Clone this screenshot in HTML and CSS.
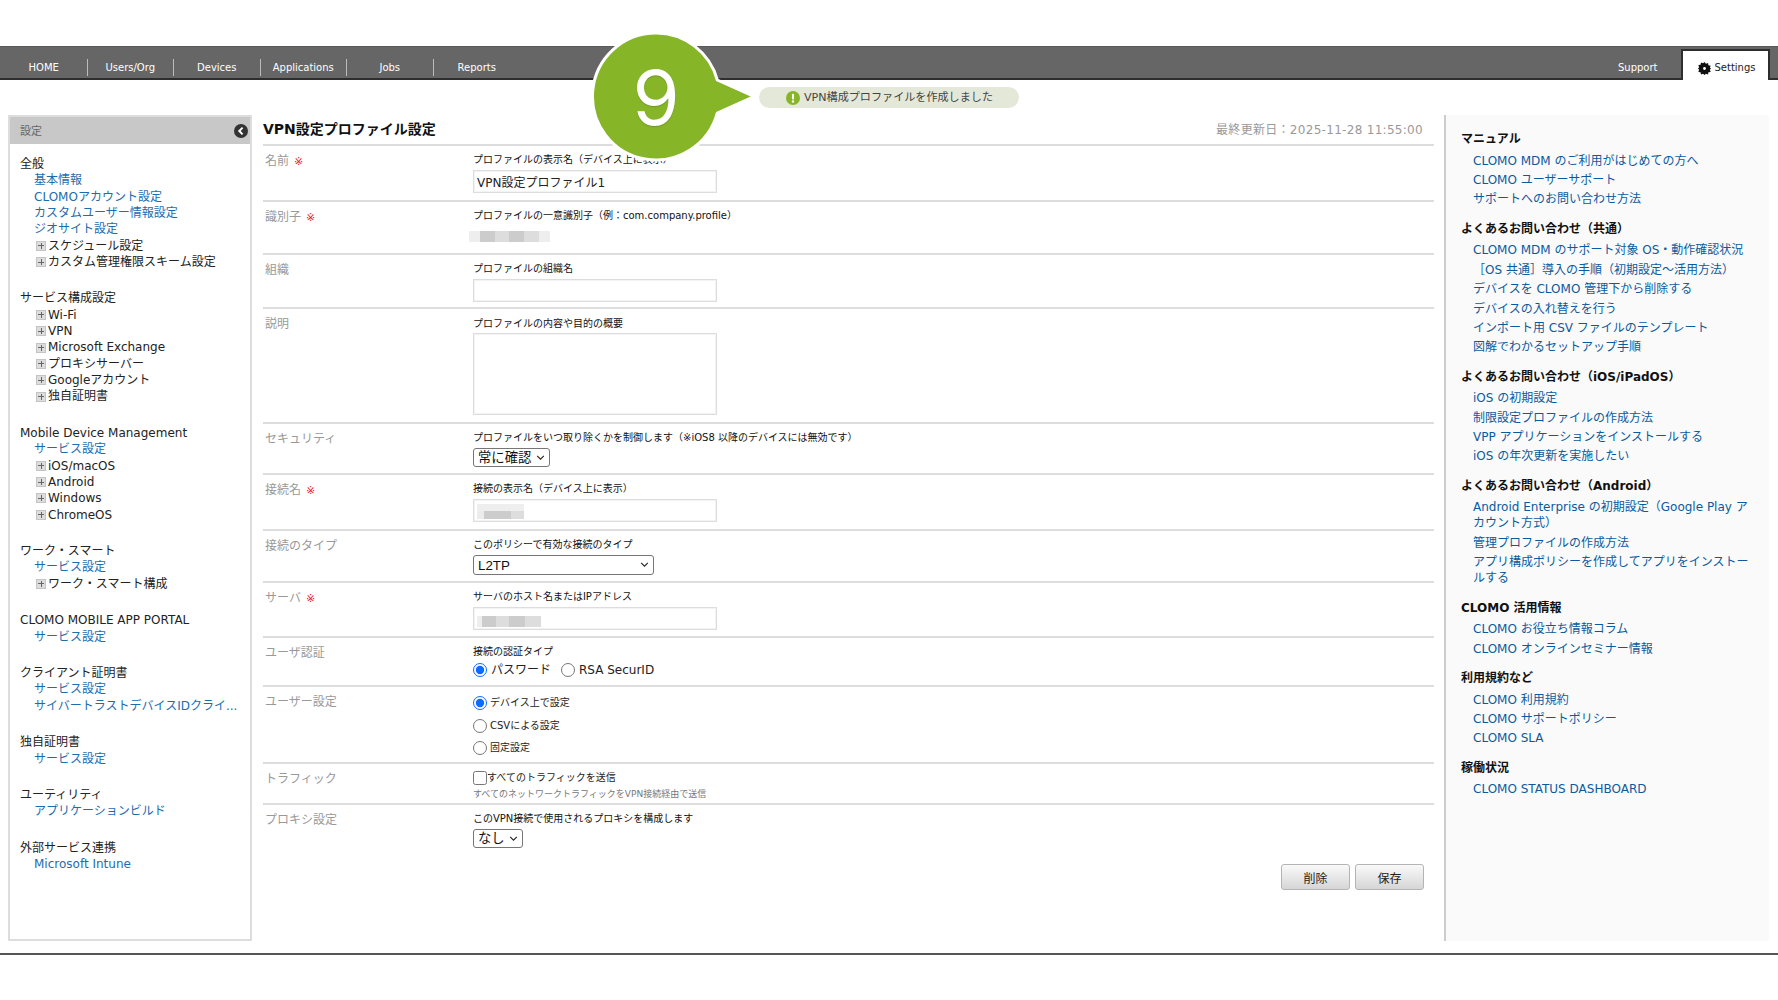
FILE: index.html
```html
<!DOCTYPE html>
<html lang="ja">
<head>
<meta charset="utf-8">
<title>VPN設定プロファイル設定</title>
<link rel="stylesheet" href="styles.css">
</head>
<body>
<nav class="topbar">
  <a class="nav-item sep">HOME</a>
  <a class="nav-item sep">Users/Org</a>
  <a class="nav-item sep">Devices</a>
  <a class="nav-item sep">Applications</a>
  <a class="nav-item sep">Jobs</a>
  <a class="nav-item">Reports</a>
  <a class="nav-item push">Support</a>
  <a class="nav-tab">
    <svg class="gear" viewBox="0 0 24 24"><path d="M12 0l2.600 3.400 4-1.500.6 4.200 4.200.6-1.500 4L24 12l-2.100 2.300 1.500 4-4.200.6-.6 4.200-4-1.500L12 24l-2.600-2.400-4 1.500-.6-4.200-4.200-.6 1.500-4L0 12l2.100-2.300-1.500-4 4.200-.6.6-4.200 4 1.500z" fill="#111"/><circle cx="12" cy="12" r="2.600" fill="#fff"/></svg>
    Settings
  </a>
</nav>

<main class="content">
  <aside class="sidebar">
    <header class="side-head"><span class="side-title">設定</span>
      <svg class="collapse" viewBox="0 0 16 16"><circle cx="8" cy="8" r="8" fill="#333"/><path d="M9.800 4.200L6 8l3.800 3.800" fill="none" stroke="#fff" stroke-width="2.200"/></svg>
    </header>
    <div class="side-body">
      <section class="group">
        <div>全般</div>
        <a class="sub">基本情報</a>
        <a class="sub">CLOMOアカウント設定</a>
        <a class="sub">カスタムユーザー情報設定</a>
        <a class="sub">ジオサイト設定</a>
        <div class="tree"><i class="plus"></i>スケジュール設定</div>
        <div class="tree"><i class="plus"></i>カスタム管理権限スキーム設定</div>
      </section>
      <section class="group">
        <div>サービス構成設定</div>
        <div class="tree"><i class="plus"></i>Wi-Fi</div>
        <div class="tree"><i class="plus"></i>VPN</div>
        <div class="tree"><i class="plus"></i>Microsoft Exchange</div>
        <div class="tree"><i class="plus"></i>プロキシサーバー</div>
        <div class="tree"><i class="plus"></i>Googleアカウント</div>
        <div class="tree"><i class="plus"></i>独自証明書</div>
      </section>
      <section class="group">
        <div>Mobile Device Management</div>
        <a class="sub">サービス設定</a>
        <div class="tree"><i class="plus"></i>iOS/macOS</div>
        <div class="tree"><i class="plus"></i>Android</div>
        <div class="tree"><i class="plus"></i>Windows</div>
        <div class="tree"><i class="plus"></i>ChromeOS</div>
      </section>
      <section class="group">
        <div>ワーク・スマート</div>
        <a class="sub">サービス設定</a>
        <div class="tree"><i class="plus"></i>ワーク・スマート構成</div>
      </section>
      <section class="group">
        <div>CLOMO MOBILE APP PORTAL</div>
        <a class="sub">サービス設定</a>
      </section>
      <section class="group">
        <div>クライアント証明書</div>
        <a class="sub">サービス設定</a>
        <a class="sub">サイバートラストデバイスIDクライ...</a>
      </section>
      <section class="group">
        <div>独自証明書</div>
        <a class="sub">サービス設定</a>
      </section>
      <section class="group">
        <div>ユーティリティ</div>
        <a class="sub">アプリケーションビルド</a>
      </section>
      <section class="group">
        <div>外部サービス連携</div>
        <a class="sub">Microsoft Intune</a>
      </section>
    </div>
  </aside>

  <section class="main">
    <header class="main-head">
      <h1>VPN設定プロファイル設定</h1>
      <span class="updated">最終更新日：2025-11-28 11:55:00</span>
    </header>
    <form class="form">
      <div class="row">
        <div class="label">名前<b class="req">※</b></div>
        <div class="field"><div class="cap">プロファイルの表示名（デバイス上に表示）</div>
          <input class="text" type="text" value="VPN設定プロファイル1"></div>
      </div>
      <div class="row">
        <div class="label">識別子<b class="req">※</b></div>
        <div class="field"><div class="cap">プロファイルの一意識別子（例：com.company.profile）</div>
          <div class="blur blur-id"></div></div>
      </div>
      <div class="row">
        <div class="label">組織</div>
        <div class="field"><div class="cap">プロファイルの組織名</div>
          <input class="text" type="text"></div>
      </div>
      <div class="row row-area">
        <div class="label">説明</div>
        <div class="field"><div class="cap">プロファイルの内容や目的の概要</div>
          <textarea class="area"></textarea></div>
      </div>
      <div class="row">
        <div class="label">セキュリティ</div>
        <div class="field"><div class="cap">プロファイルをいつ取り除くかを制御します（※iOS8 以降のデバイスには無効です）</div>
          <span class="sel-wrap"><select class="sel"><option>常に確認</option></select><svg class="chev" viewBox="0 0 10 6"><path d="M1 1l4 4 4-4" fill="none" stroke="#222" stroke-width="1.300"/></svg></span></div>
      </div>
      <div class="row">
        <div class="label">接続名<b class="req">※</b></div>
        <div class="field"><div class="cap">接続の表示名（デバイス上に表示）</div>
          <div class="text"><div class="blur blur-name"></div></div></div>
      </div>
      <div class="row">
        <div class="label">接続のタイプ</div>
        <div class="field"><div class="cap">このポリシーで有効な接続のタイプ</div>
          <span class="sel-wrap"><select class="sel sel-wide"><option>L2TP</option></select><svg class="chev" viewBox="0 0 10 6"><path d="M1 1l4 4 4-4" fill="none" stroke="#222" stroke-width="1.300"/></svg></span></div>
      </div>
      <div class="row">
        <div class="label">サーバ<b class="req">※</b></div>
        <div class="field"><div class="cap">サーバのホスト名またはIPアドレス</div>
          <div class="text"><div class="blur blur-host"></div></div></div>
      </div>
      <div class="row">
        <div class="label">ユーザ認証</div>
        <div class="field"><div class="cap">接続の認証タイプ</div>
          <div class="radios">
            <label class="radio"><input type="radio" name="auth" checked>パスワード</label>
            <label class="radio"><input type="radio" name="auth">RSA SecurID</label>
          </div></div>
      </div>
      <div class="row">
        <div class="label">ユーザー設定</div>
        <div class="field stack">
          <label class="radio small"><input type="radio" name="user" checked>デバイス上で設定</label>
          <label class="radio small"><input type="radio" name="user">CSVによる設定</label>
          <label class="radio small"><input type="radio" name="user">固定設定</label>
        </div>
      </div>
      <div class="row">
        <div class="label">トラフィック</div>
        <div class="field">
          <label class="check"><input type="checkbox">すべてのトラフィックを送信</label>
          <div class="hint">すべてのネットワークトラフィックをVPN接続経由で送信</div></div>
      </div>
      <div class="row">
        <div class="label">プロキシ設定</div>
        <div class="field"><div class="cap">このVPN接続で使用されるプロキシを構成します</div>
          <span class="sel-wrap"><select class="sel"><option>なし</option></select><svg class="chev" viewBox="0 0 10 6"><path d="M1 1l4 4 4-4" fill="none" stroke="#222" stroke-width="1.300"/></svg></span></div>
      </div>
    </form>
    <div class="actions">
      <button class="btn" type="button">削除</button>
      <button class="btn" type="button">保存</button>
    </div>
  </section>

  <aside class="help">
    <h2>マニュアル</h2>
    <a>CLOMO MDM のご利用がはじめての方へ</a>
    <a>CLOMO ユーザーサポート</a>
    <a>サポートへのお問い合わせ方法</a>
    <h2>よくあるお問い合わせ（共通）</h2>
    <a>CLOMO MDM のサポート対象 OS・動作確認状況</a>
    <a>［OS 共通］導入の手順（初期設定～活用方法）</a>
    <a>デバイスを CLOMO 管理下から削除する</a>
    <a>デバイスの入れ替えを行う</a>
    <a>インポート用 CSV ファイルのテンプレート</a>
    <a>図解でわかるセットアップ手順</a>
    <h2>よくあるお問い合わせ（iOS/iPadOS）</h2>
    <a>iOS の初期設定</a>
    <a>制限設定プロファイルの作成方法</a>
    <a>VPP アプリケーションをインストールする</a>
    <a>iOS の年次更新を実施したい</a>
    <h2>よくあるお問い合わせ（Android）</h2>
    <a>Android Enterprise の初期設定（Google Play アカウント方式）</a>
    <a>管理プロファイルの作成方法</a>
    <a>アプリ構成ポリシーを作成してアプリをインストールする</a>
    <h2>CLOMO 活用情報</h2>
    <a>CLOMO お役立ち情報コラム</a>
    <a>CLOMO オンラインセミナー情報</a>
    <h2>利用規約など</h2>
    <a>CLOMO 利用規約</a>
    <a>CLOMO サポートポリシー</a>
    <a>CLOMO SLA</a>
    <h2>稼働状況</h2>
    <a>CLOMO STATUS DASHBOARD</a>
  </aside>
</main>
<div class="footer-line"></div>

<div class="flash">
  <svg class="flash-icon" viewBox="0 0 16 16"><circle cx="8" cy="8" r="8" fill="#86b527"/><rect x="6.800" y="3" width="2.400" height="6.600" rx="1" fill="#fff"/><circle cx="8" cy="12" r="1.400" fill="#fff"/></svg>
  <span class="flash-text">VPN構成プロファイルを作成しました</span>
</div>
<div class="callout">
  <svg class="callout-shape" viewBox="0 0 175 136">
    <path d="M66 3A63.500 63.500 0 0 1 127.300 50L164 66.500L127.300 83A63.500 63.500 0 1 1 66 3z" fill="#86b527" stroke="#fff" stroke-width="3" stroke-linejoin="round"/>
  </svg>
  <span class="callout-num">9</span>
</div>
</body>
</html>
```
FILE: styles.css
```css
* { box-sizing: border-box; }
html, body { margin: 0; padding: 0; overflow: hidden; }
body {
  height: 1000px;
  background: #fff;
  color: #222;
  font: 12px/16.33px "DejaVu Sans", "Noto Sans CJK JP", sans-serif;
  padding-top: 46px;
  position: relative;
}
a { color: #1c6cae; display: block; }

.topbar {
  display: flex;
  height: 34px;
  background: #666;
  border-top: 1px solid #5a5a5a;
  border-bottom: 2px solid #2e2e2e;
  color: #fff;
  padding: 0 8px 0 1px;
}
.nav-item {
  width: 86.5px;
  height: 17px;
  margin-top: 12px;
  color: #fff;
  font-size: 10px;
  line-height: 17px;
  text-align: center;
}
.sep { border-right: 1px solid #bbb; }
.push { margin-left: auto; }
.nav-tab {
  width: 89px;
  height: 31px;
  margin-top: 2px;
  display: flex;
  align-items: center;
  justify-content: center;
  gap: 3px;
  color: #222;
  font-size: 10px;
  background: #fff;
  border: 2px solid #2e2e2e;
  border-bottom: 0;
  padding: 5px 0 0 3px;
  position: relative;
}
.gear { width: 13px; height: 13px; }

.content {
  display: flex;
  height: 826px;
  margin-top: 35px;
  padding: 0 9px 0 8px;
}
.sidebar {
  width: 244px;
  flex: none;
  border: 2px solid #ddd;
  margin-right: 11px;
}
.side-head {
  height: 27px;
  background: #c8c8c8;
  color: #666;
  font-size: 11px;
  display: flex;
  align-items: center;
  justify-content: space-between;
  padding: 0 2px 0 10px;
}
.side-title { padding-top: 3px; }
.collapse { width: 14px; height: 14px; }
.side-body { padding: 12px 9px 0 10px; }
.group { margin-bottom: 20.200px; }
.sub { padding-left: 14px; white-space: nowrap; }
.tree { padding-left: 16px; white-space: nowrap; display: flex; align-items: center; }
.plus {
  width: 10px;
  height: 10px;
  margin-right: 2px;
  flex: none;
  background:
    linear-gradient(#666, #666) center / 6px 1px no-repeat,
    linear-gradient(#666, #666) center / 1px 6px no-repeat,
    #ddd;
  border: 1px solid #c4c4c4;
}

.main { width: 1171px; flex: none; margin-right: 10px; }
.main-head {
  height: 29px;
  display: flex;
  align-items: center;
  justify-content: space-between;
  padding-right: 11px;
}
h1 { margin: 0; font-size: 14px; font-weight: bold; color: #111; }
.updated { color: #999; letter-spacing: 0.3px; padding-top: 2px; }
.form {
  display: grid;
  grid-template-columns: 1fr;
  grid-template-rows: 56px 53px 54px 115px 51px 56px 52px 55px 49px 77px 41px 61px;
}
.row {
  display: grid;
  grid-template-columns: 210px 1fr;
  border-top: 2px solid #ddd;
  padding-top: 7px;
}
.label { padding: 0.500px 0 0 2px; color: #999; line-height: 14px; }
.req { color: #e8202c; font-size: 11px; margin-left: 5px; font-weight: normal; }
.field { display: flex; flex-direction: column; align-items: flex-start; }
.cap { font-size: 10px; line-height: 14px; color: #111; margin-bottom: 4px; }
.row-area .cap { padding-top: 1px; }
.text {
  display: block;
  width: 244px;
  height: 23px;
  margin-top: -1px;
  border: 1px solid #ddd;
  box-shadow: inset 0 0 0 1px #f3f3f3;
  font: 12px "DejaVu Sans", "Noto Sans CJK JP", sans-serif;
  color: #222;
  padding: 0 3px;
  outline: 0;
}
.area {
  display: block;
  width: 244px;
  height: 82px;
  border: 1px solid #ddd;
  box-shadow: inset 0 0 0 1px #f3f3f3;
  resize: none;
  outline: 0;
  margin: -2px 0 0;
}
.sel-wrap { position: relative; display: inline-block; margin-top: -1px; line-height: 0; }
.sel {
  appearance: none;
  -webkit-appearance: none;
  font: 13.33px "Liberation Sans", "Noto Sans CJK JP", sans-serif;
  height: 19px;
  padding: 0 17px 0 4px;
  background: #fff;
  color: #111;
  border: 1px solid #767676;
  border-radius: 3px;
  margin: 0;
}
.sel-wide { width: 181px; height: 20px; }
.chev {
  position: absolute;
  right: 5px;
  top: 7px;
  width: 9px;
  height: 5px;
  pointer-events: none;
}
.blur { height: 15px; }
.blur-id {
  width: 81px;
  height: 11px;
  margin: 4px 0 0 -4px;
  background: linear-gradient(90deg, #eee 0 13%, #ccc 13% 32%, #ddd 32% 50%, #ccc 50% 68%, #ddd 68% 87%, #eee 87%);
}
.blur-name {
  width: 47px;
  margin-top: 4px;
  background:
    linear-gradient(#eee, #eee) left top / 100% 7px no-repeat,
    linear-gradient(90deg, #ececec 0 15%, #ccc 15% 72%, #ddd 72%);
}
.blur-host {
  width: 64px;
  height: 11px;
  margin-top: 8px;
  background: linear-gradient(90deg, #eee 0 8%, #ccc 8% 30%, #ddd 30% 50%, #ccc 50% 75%, #ddd 75%);
}
.radios { display: flex; gap: 10px; margin-top: -3px; }
.radio { display: flex; align-items: center; gap: 4px; line-height: 20px; }
.radio input, .check input {
  width: 14px;
  height: 14px;
  margin: 0;
  accent-color: #0a6cff;
  flex: none;
}
.stack { margin-top: -1px; gap: 2.500px; }
.radio.small { font-size: 10px; height: 20px; gap: 3px; }
.check { display: flex; align-items: center; font-size: 10px; line-height: 18px; margin-top: -2px; }
.hint { font-size: 9px; line-height: 12px; color: #777; margin-top: 1px; }

.actions {
  display: flex;
  justify-content: flex-end;
  gap: 5px;
  padding-right: 10px;
}
.btn {
  width: 69px;
  height: 26px;
  font: 12px "DejaVu Sans", "Noto Sans CJK JP", sans-serif;
  color: #222;
  background: linear-gradient(#fafafa, #d6d6d6);
  border: 1px solid #b4b4b4;
  border-radius: 3px;
  padding: 0;
}

.help {
  flex: 1;
  background: #fafafa;
  border-left: 2px solid #ccc;
  padding: 16px 15px 0 15px;
}
.help h2 {
  margin: 13.400px 0 5.600px;
  font-size: 12px;
  line-height: 16px;
  font-weight: bold;
  color: #111;
}
.help h2:first-child { margin-top: 0; }
.help a {
  color: #0b5a9e;
  line-height: 16px;
  padding-left: 12px;
  margin-bottom: 3.400px;
}

.footer-line { height: 2px; background: #555; margin-top: 12px; }

.flash {
  position: absolute;
  left: 759px;
  top: 87px;
  width: 260px;
  height: 21px;
  border-radius: 11px;
  background: #e4e8d8;
  color: #444;
  font-size: 11.100px;
  display: flex;
  align-items: center;
  padding-left: 27px;
  gap: 4px;
}
.flash-text { padding-top: 1px; }
.flash-icon { width: 14px; height: 14px; }
.callout {
  position: absolute;
  left: 590px;
  top: 30px;
  width: 175px;
  height: 136px;
}
.callout-shape { width: 175px; height: 136px; display: block; }
.callout-num {
  position: absolute;
  left: 66px;
  top: 67px;
  transform: translate(-50%, -50%);
  font: 400 76px/1 "Inter", sans-serif;
  color: #fff;
  text-shadow: 0 1px 1px rgba(80, 110, 20, 0.4);
}
```
